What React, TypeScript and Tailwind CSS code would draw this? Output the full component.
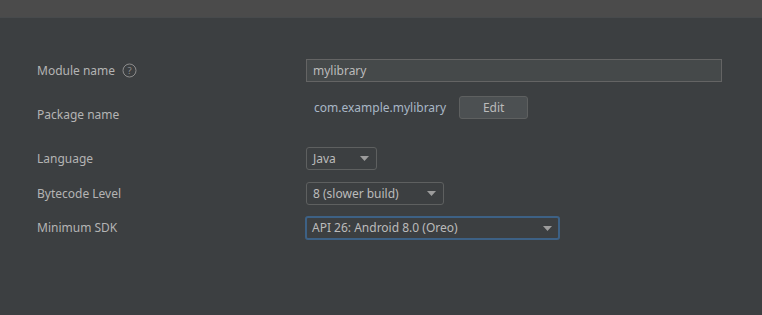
import React from "react";

const font = { fontFamily: '"Noto Sans", "Open Sans", sans-serif' };

function Arrow() {
  return (
    <svg width="9" height="5" viewBox="0 0 9 5" className="shrink-0">
      <path d="M0 0 L9 0 L4.5 5 Z" fill="#9c9c9c" />
    </svg>
  );
}

function Combo({ text, width, focused }: { text: string; width: string; focused?: boolean }) {
  return (
    <div
      className={
        "flex items-center justify-between rounded-[3px] bg-[#3c3f41] text-[12px] text-[#bbbbbb] " +
        width +
        (focused
          ? " h-[24px] border-2 border-[#3d6185] pl-[5px] pr-[6px]"
          : " h-[23px] border border-[#5e6060] pl-[6px] pr-[7px]")
      }
    >
      <span>{text}</span>
      <Arrow />
    </div>
  );
}

export default function App() {
  return (
    <div className="w-[762px] h-[315px] bg-[#3c3f41] flex flex-col" style={font}>
      <div className="h-[18px] bg-[#4b4b4b] border-b border-[#474a4c]" />
      <div className="flex flex-col pl-[37px] pt-[41px] text-[12px] text-[#b4b4b4]">
        <div className="flex items-center h-[23px]">
          <div className="w-[269px] flex items-center gap-[7px]">
            <span>Module name</span>
            <svg width="15" height="15" viewBox="0 0 15 15">
              <circle cx="7.5" cy="7.5" r="6.5" fill="none" stroke="#8c8c8c" strokeWidth="1" />
              <text x="7.5" y="11" textAnchor="middle" fontSize="9.5" fill="#8c8c8c" fontFamily="Noto Sans, sans-serif">?</text>
            </svg>
          </div>
          <div className="w-[416px] h-[23px] bg-[#45494a] border border-[#646464] flex items-center pl-[6px] text-[#bbbbbb]">
            mylibrary
          </div>
        </div>
        <div className="flex items-center h-[23px] mt-[14px]">
          <div className="w-[269px] self-start mt-[10px]">Package name</div>
          <span className="ml-[8px] text-[#a9b7c6]">com.example.mylibrary</span>
          <div className="ml-[13px] w-[69px] h-[23px] rounded-[3px] bg-[#4c5052] border border-[#5e6060] flex items-center justify-center text-[#bbbbbb]">
            Edit
          </div>
        </div>
        <div className="flex items-center h-[23px] mt-[28px]">
          <div className="w-[269px]">Language</div>
          <Combo text="Java" width="w-[71px]" />
        </div>
        <div className="flex items-center h-[23px] mt-[12px]">
          <div className="w-[269px]">Bytecode Level</div>
          <Combo text="8 (slower build)" width="w-[138px]" />
        </div>
        <div className="flex items-center h-[24px] mt-[11px]">
          <div className="w-[268px]">Minimum SDK</div>
          <Combo text="API 26: Android 8.0 (Oreo)" width="w-[255px]" focused />
        </div>
      </div>
    </div>
  );
}
